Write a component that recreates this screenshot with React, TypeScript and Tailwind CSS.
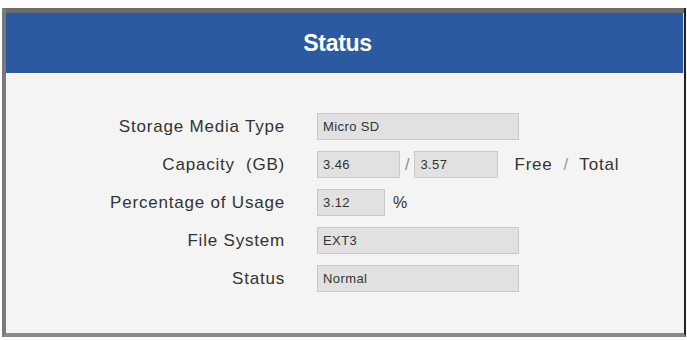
export default function App() {
  const label = 'w-[279px] text-right text-[17px] tracking-[0.8px] text-[#333] leading-none';
  const box = 'h-[27px] bg-[#e1e1e1] border border-[#c9c9c9] pl-[5px] flex items-center text-[13px] tracking-[0.4px] text-[#333] leading-none';

  return (
    <div className="w-[687px] h-[340px] bg-white pt-[8px] pl-[2px] pr-[1px] pb-[3px] flex" style={{ fontFamily: '"Liberation Sans", Arial, sans-serif' }}>
      <div className="flex-1 flex flex-col border-l-4 border-l-[#7a7a7a] border-r-2 border-r-[#222] border-b-4 border-b-[#8a8a8a]">
        {/* Header */}
        <div className="h-[5px] bg-[#6c6c6c]" />
        <div className="h-[60px] bg-[#2c5aa0] flex items-center justify-center pr-[14px] border-r border-r-[#dde]">
          <span className="text-white font-bold text-[23px] tracking-[-0.3px]">Status</span>
        </div>

        {/* Body */}
        <div className="flex-1 bg-[#f4f4f4] pt-[40px] flex flex-col gap-[11px]">
          <div className="flex items-center gap-[32px]">
            <div className={label}>Storage Media Type</div>
            <div className={`${box} w-[202px]`}>Micro SD</div>
          </div>

          <div className="flex items-center gap-[32px]">
            <div className={label}>Capacity&nbsp;&nbsp;(GB)</div>
            <div className="flex items-center">
              <div className={`${box} w-[83px]`}>3.46</div>
              <span className="mx-[5px] text-[16px] text-[#888]">/</span>
              <div className={`${box} w-[84px]`}>3.57</div>
              <span className="ml-[16px] text-[17px] tracking-[0.8px] text-[#333]">Free</span>
              <span className="mx-[11px] text-[17px] text-[#999]">/</span>
              <span className="text-[17px] tracking-[0.8px] text-[#333]">Total</span>
            </div>
          </div>

          <div className="flex items-center gap-[32px]">
            <div className={label}>Percentage of Usage</div>
            <div className="flex items-center">
              <div className={`${box} w-[68px]`}>3.12</div>
              <span className="ml-[8px] text-[16px] text-[#333]">%</span>
            </div>
          </div>

          <div className="flex items-center gap-[32px]">
            <div className={label}>File System</div>
            <div className={`${box} w-[202px]`}>EXT3</div>
          </div>

          <div className="flex items-center gap-[32px]">
            <div className={label}>Status</div>
            <div className={`${box} w-[202px]`}>Normal</div>
          </div>
        </div>
      </div>
    </div>
  );
}
